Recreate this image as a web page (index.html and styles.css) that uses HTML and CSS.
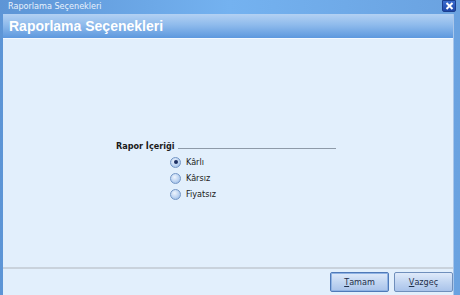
FILE: index.html
```html
<!DOCTYPE html>
<html lang="tr">
<head>
    <meta charset="UTF-8">
    <title>Raporlama Seçenekleri</title>
    <link rel="stylesheet" href="styles.css">
</head>
<body>
    <div class="window">
        <!-- pencere başlığı -->
        <div class="titlebar">
            <span class="title-text">Raporlama Seçenekleri</span>
            <div class="close-btn">
                <svg width="9" height="8" viewBox="0 0 9 8">
                    <path d="M1.5 1 L7.5 7 M7.5 1 L1.5 7" stroke="#fff" stroke-width="2"/>
                </svg>
            </div>
        </div>
        <div class="frame">
            <div class="header">Raporlama Seçenekleri</div>
            <div class="content">
                <div class="group">
                    <div class="group-title">
                        <span>Rapor İçeriği</span>
                        <em class="group-line"></em>
                    </div>
                    <div class="options">
                        <label class="option"><i class="radio checked"></i>Kârlı</label>
                        <label class="option"><i class="radio"></i>Kârsız</label>
                        <label class="option"><i class="radio"></i>Fiyatsız</label>
                    </div>
                </div>
            </div>
            <div class="footer">
                <div class="btn"><u>T</u>amam</div>
                <div class="btn"><u>V</u>azgeç</div>
            </div>
        </div>
    </div>
</body>
</html>
```
FILE: styles.css
```css
*{
    margin: 0;
    padding: 0;
    box-sizing: border-box;
}
body{
    width: 460px;
    height: 295px;
    overflow: hidden;
    font-family: "DejaVu Sans Condensed", "DejaVu Sans", sans-serif;
    background: #e2effc;
}
.window{
    width: 460px;
    height: 295px;
    display: flex;
    flex-direction: column;
    background: linear-gradient(90deg, #5d95d6 0%, #74b2f0 50%, #6aa2e0 100%);
}
.titlebar{
    height: 14px;
    display: flex;
    align-items: flex-start;
    justify-content: space-between;
    padding-left: 8px;
    padding-right: 4px;
}
.title-text{
    font-size: 9px;
    line-height: 12px;
    color: #e8f2fc;
}
.close-btn{
    width: 14px;
    height: 12px;
    border-radius: 0 0 2px 2px;
    background: linear-gradient(#3a6ccf, #1d46a8);
    border: 1px solid #1b3f8f;
    display: flex;
    align-items: center;
    justify-content: center;
}
.frame{
    flex: 1;
    display: flex;
    flex-direction: column;
    margin: 0 6px 0 3px;
    background: #e2effc;
    border-right: 1px solid #a9c6ea;
}
.header{
    height: 25px;
    padding-left: 6px;
    font-family: "Liberation Sans", Arial, sans-serif;
    font-size: 14px;
    font-weight: bold;
    line-height: 24px;
    color: #fff;
    background: linear-gradient(#b3d1f3 0%, #8fbbec 45%, #5d98de 100%);
    border-bottom: 1px solid #f4f9ff;
}
.content{
    flex: 1;
    display: flex;
    justify-content: flex-start;
    padding-left: 113px;
    padding-top: 100px;
}
.group{
    width: 220px;
}
.group-title{
    display: flex;
    align-items: flex-end;
    font-size: 9px;
    font-weight: bold;
    color: #1a1a1a;
    height: 12px;
}
.group-line{
    flex: 1;
    margin-left: 3px;
    margin-bottom: 2px;
    border-bottom: 1px solid #8e9aa8;
}
.options{
    padding-left: 54px;
    padding-top: 5px;
    display: flex;
    flex-direction: column;
    gap: 4px;
}
.option{
    display: flex;
    align-items: center;
    height: 12px;
    font-size: 9px;
    color: #1a1a1a;
}
.radio{
    width: 11px;
    height: 11px;
    border-radius: 50%;
    margin-right: 5px;
    border: 1px solid #7496c6;
    background: radial-gradient(circle at 40% 35%, #eef4fd 0%, #bcd3f1 55%, #8fb2e3 100%);
    display: flex;
    align-items: center;
    justify-content: center;
}
.radio.checked::after{
    content: "";
    width: 4px;
    height: 4px;
    border-radius: 50%;
    background: #1c2f63;
}
.footer{
    height: 28px;
    border-top: 2px solid #c9d2dc;
    display: flex;
    justify-content: flex-end;
    align-items: flex-start;
    gap: 5px;
    padding-top: 3px;
}
.btn{
    width: 59px;
    height: 20px;
    border: 1px solid #6f8fbc;
    border-radius: 2px;
    background: linear-gradient(#dfeafa 0%, #c2d6f2 50%, #a9c3ea 100%);
    font-size: 9px;
    color: #1e2f4a;
    display: flex;
    align-items: center;
    justify-content: center;
}
.btn:first-child{
    border-color: #4f79b8;
    box-shadow: inset 0 0 0 1px #8fb3e4;
}
```
